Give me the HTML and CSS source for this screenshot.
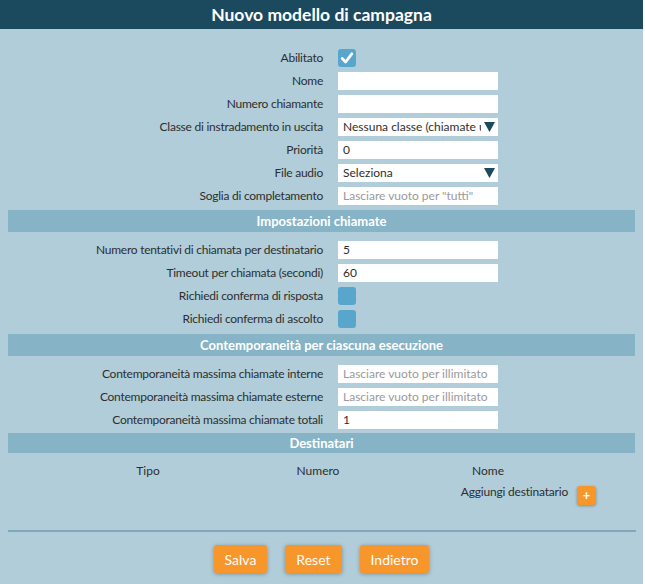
FILE: index.html
```html
<!DOCTYPE html>
<html lang="it">
<head>
  <meta charset="UTF-8" />
  <meta name="viewport" content="width=device-width, initial-scale=1.0"/>
  <title>Nuovo modello di campagna</title>
  <link rel="stylesheet" href="styles.css">
</head>
<body>
  <div class="panel">
    <div class="title">Nuovo modello di campagna</div>

    <div class="fields top">
      <div class="row">
        <label>Abilitato</label>
        <span class="check">
          <svg width="18" height="18" viewBox="0 0 18 18"><path d="M4.2 9.6 L7.6 13 L13.8 4.8" fill="none" stroke="#fff" stroke-width="2.8" stroke-linecap="round" stroke-linejoin="round"/></svg>
        </span>
      </div>
      <div class="row"><label>Nome</label><input type="text"></div>
      <div class="row"><label>Numero chiamante</label><input type="text"></div>
      <div class="row">
        <label>Classe di instradamento in uscita</label>
        <div class="select">
          <span class="value">Nessuna classe (chiamate uscenti)</span>
          <svg class="arrow" width="11" height="10" viewBox="0 0 11 10"><polygon points="0,0 11,0 5.5,10" fill="#1b4a5f"/></svg>
        </div>
      </div>
      <div class="row"><label>Priorità</label><input type="text" value="0"></div>
      <div class="row">
        <label>File audio</label>
        <div class="select">
          <span class="value">Seleziona</span>
          <svg class="arrow" width="11" height="10" viewBox="0 0 11 10"><polygon points="0,0 11,0 5.5,10" fill="#1b4a5f"/></svg>
        </div>
      </div>
      <div class="row"><label>Soglia di completamento</label><input type="text" placeholder="Lasciare vuoto per &quot;tutti&quot;"></div>
    </div>

    <div class="section">Impostazioni chiamate</div>
    <div class="fields">
      <div class="row"><label>Numero tentativi di chiamata per destinatario</label><input type="text" value="5"></div>
      <div class="row"><label>Timeout per chiamata (secondi)</label><input type="text" value="60"></div>
      <div class="row"><label>Richiedi conferma di risposta</label><span class="check off"></span></div>
      <div class="row"><label>Richiedi conferma di ascolto</label><span class="check off"></span></div>
    </div>

    <div class="section sec2">Contemporaneità per ciascuna esecuzione</div>
    <div class="fields">
      <div class="row"><label>Contemporaneità massima chiamate interne</label><input type="text" placeholder="Lasciare vuoto per illimitato"></div>
      <div class="row"><label>Contemporaneità massima chiamate esterne</label><input type="text" placeholder="Lasciare vuoto per illimitato"></div>
      <div class="row"><label>Contemporaneità massima chiamate totali</label><input type="text" value="1"></div>
    </div>

    <div class="section dest">Destinatari</div>
    <div class="dest-table">
      <div class="th">Tipo</div>
      <div class="th">Numero</div>
      <div class="th">Nome</div>
      <div></div>
      <div></div>
      <div></div>
      <div class="add-label">Aggiungi destinatario</div>
      <div><button class="plus">+</button></div>
    </div>

    <div class="divider"></div>

    <div class="actions">
      <button class="btn">Salva</button>
      <button class="btn">Reset</button>
      <button class="btn">Indietro</button>
    </div>
  </div>
</body>
</html>
```

FILE: styles.css
```css
body {
  margin: 0;
  background: #fff;
  font-family: Lato, "Liberation Sans", sans-serif;
  font-size: 12px;
  color: #2e2e2e;
}
.panel {
  width: 643px;
  min-height: 100vh;
  background: #b0cdd9;
}
.title {
  height: 29px;
  line-height: 29px;
  background: #1b4a5f;
  color: #fff;
  font-size: 17.5px;
  font-weight: bold;
  text-align: center;
}
.fields {
  padding-top: 6px;
}
.fields.top {
  padding-top: 17px;
}
.row {
  display: flex;
  align-items: center;
  height: 23px;
}
.row label {
  flex: 0 0 323px;
  text-align: right;
  margin-right: 15px;
  letter-spacing: -0.25px;
}
.row input,
.select {
  box-sizing: border-box;
  width: 160px;
  height: 18px;
  border: none;
  margin: 0;
  padding: 0 5px;
  background: #fff;
  font-family: inherit;
  font-size: 12px;
  color: #2e2e2e;
  outline: none;
}
.row input::placeholder {
  color: #9a9a9a;
}
.select {
  display: flex;
  align-items: center;
  padding-right: 3px;
}
.select .value {
  flex: 1;
  overflow: hidden;
  white-space: nowrap;
}
.select .arrow {
  display: block;
  margin-left: 3px;
}
.check {
  display: block;
  width: 18px;
  height: 18px;
  border-radius: 3px;
  background: #58a6cb;
}
.check svg {
  display: block;
}
.section {
  margin: 3px 8px 0;
  height: 22px;
  line-height: 22px;
  background: #86b4c6;
  color: #fff;
  font-size: 13px;
  font-weight: bold;
  text-align: center;
}
.section.sec2 {
  margin-top: 4px;
}
.section.dest {
  margin-top: 2px;
  height: 20px;
  line-height: 20px;
}
.dest-table {
  display: grid;
  grid-template-columns: 170px 170px 170px 30px;
  margin-left: 63px;
  padding-top: 9px;
}
.th {
  text-align: center;
  height: 17px;
  line-height: 17px;
}
.add-label {
  text-align: right;
  padding-right: 5px;
  line-height: 17px;
  margin-top: 4px;
  letter-spacing: -0.2px;
}
.plus {
  margin: 7px 0 0 4px;
  width: 19px;
  height: 19px;
  padding: 0;
  border: none;
  border-radius: 3px;
  background: #f7962b;
  color: #fff;
  font-family: inherit;
  font-weight: bold;
  font-size: 13px;
  line-height: 19px;
  box-shadow: 0 1px 3px rgba(0, 0, 0, 0.3);
}
.divider {
  margin: 25px 7px 0 8px;
  height: 2px;
  background: #7fa8bd;
}
.actions {
  display: flex;
  justify-content: center;
  gap: 18px;
  padding: 13px 0 10px;
}
.btn {
  height: 28px;
  padding: 0 11px;
  border: none;
  border-radius: 3px;
  background: #f7962b;
  color: #fff;
  font-family: inherit;
  font-size: 14px;
  box-shadow: 0 1px 4px rgba(0, 0, 0, 0.3);
  cursor: pointer;
}
```
